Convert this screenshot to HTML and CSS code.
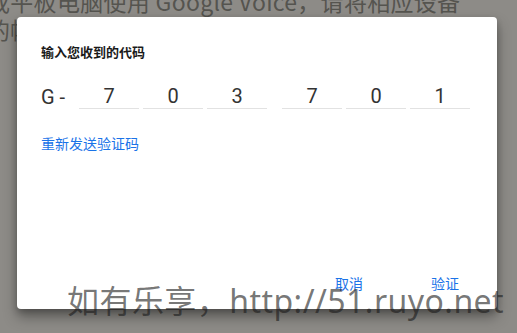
FILE: index.html
```html
<!DOCTYPE html>
<html lang="zh-CN">
<head>
<meta charset="utf-8">
<title>输入您收到的代码</title>
<link rel="stylesheet" href="styles.css">
</head>
<body>
  <div class="page">
    <p class="page-line">或平板电脑使用 Google Voice，请将相应设备</p>
    <p class="page-line">的帐号与您的电话号码关联。</p>
  </div>

  <div class="dialog">
    <h2 class="dialog-title">输入您收到的代码</h2>
    <div class="code-row">
      <span class="code-prefix">G -</span>
      <div class="code-group">
        <span class="digit">7</span>
        <span class="digit">0</span>
        <span class="digit">3</span>
      </div>
      <div class="code-group">
        <span class="digit">7</span>
        <span class="digit">0</span>
        <span class="digit">1</span>
      </div>
    </div>
    <a class="resend" href="#">重新发送验证码</a>
    <div class="actions">
      <button class="btn">取消</button>
      <button class="btn">验证</button>
    </div>
  </div>

  <div class="watermark">如有乐享，http://51.ruyo.net</div>
</body>
</html>
```

FILE: styles.css
```css
html, body {
  margin: 0;
  padding: 0;
}

body {
  width: 517px;
  height: 333px;
  overflow: hidden;
  position: relative;
  background: #8d8b87;
  font-family: Roboto, "Noto Sans CJK SC", sans-serif;
}

.page {
  margin: -13px 0 0 -13px;
  color: #55544f;
  font-family: "Noto Sans CJK SC", sans-serif;
  font-size: 23px;
  line-height: 28px;
  letter-spacing: 0.3px;
  white-space: nowrap;
}

.page-line {
  margin: 0;
}

.dialog {
  position: absolute;
  left: 17px;
  top: 17px;
  width: 480px;
  height: 292px;
  box-sizing: border-box;
  padding: 25px 20px 8px 24px;
  background: #fff;
  border-radius: 4px;
  box-shadow: 0 8px 14px rgba(0, 0, 0, 0.35), 0 3px 6px rgba(0, 0, 0, 0.2);
  display: flex;
  flex-direction: column;
  align-items: flex-start;
}

.dialog-title {
  margin: 0;
  font-family: "Noto Sans CJK SC", sans-serif;
  font-size: 13px;
  line-height: 20px;
  font-weight: 700;
  color: #1a1a1a;
}

.code-row {
  margin-top: 22px;
  display: flex;
  align-items: flex-end;
  gap: 15px;
  font-family: Roboto, sans-serif;
  font-size: 20px;
  line-height: 24px;
  color: #333;
}

.code-prefix {
  width: 23px;
  flex: none;
  white-space: nowrap;
}

.code-group {
  display: flex;
  gap: 4px;
}

.digit {
  width: 60px;
  text-align: center;
  border-bottom: 1px solid #e2e2e2;
}

.resend {
  margin-top: 24px;
  font-family: "Noto Sans CJK SC", sans-serif;
  font-size: 14px;
  line-height: 20px;
  color: #1a73e8;
  text-decoration: none;
}

.actions {
  margin-top: auto;
  align-self: stretch;
  display: flex;
  justify-content: flex-end;
  gap: 32px;
}

.btn {
  min-width: 64px;
  height: 36px;
  padding: 8px 8px;
  border: 0;
  background: transparent;
  font-family: "Noto Sans CJK SC", sans-serif;
  font-size: 14px;
  line-height: 20px;
  color: #1a73e8;
  cursor: pointer;
}

.watermark {
  position: absolute;
  left: 67px;
  top: 279px;
  font-family: "Noto Sans", "Noto Sans CJK SC", sans-serif;
  font-size: 32px;
  line-height: 44px;
  letter-spacing: 0.45px;
  color: rgba(28, 28, 28, 0.62);
  white-space: nowrap;
}
```
